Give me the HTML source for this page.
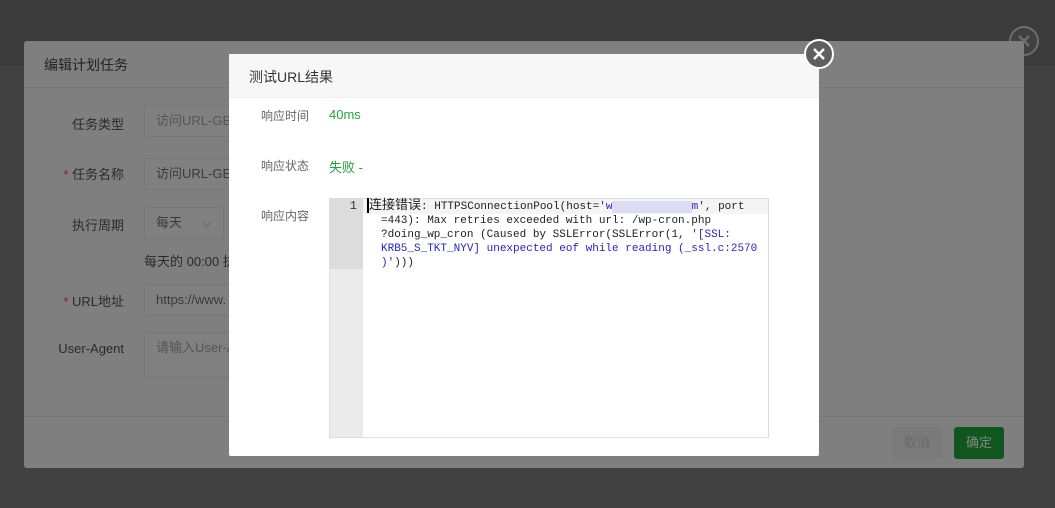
<!DOCTYPE html>
<html><head><meta charset="utf-8"><style>
*{margin:0;padding:0;box-sizing:border-box}
body{width:1055px;height:508px;background:#414141;position:relative;overflow:hidden;font-family:"Liberation Sans","Noto Sans CJK SC",sans-serif;font-size:13px}
.top{position:absolute;left:0;top:0;width:1055px;height:66px;background:#3b3b3b}
.bg{position:absolute;left:24px;top:41px;width:1000px;height:427px;background:#7f7f7f;border-radius:3px}
.bg .hd{height:47px;border-bottom:1px solid #777;padding:14px 20px;font-size:14px;color:#222}
.lbl{position:absolute;color:#2a2a2a;font-size:13px;text-align:right;width:100px}
.lbl .r{color:#8a1f1f}
.inp{position:absolute;left:120px;border:1px solid #777;border-radius:3px;padding:0 11px;color:#3a3a3a;line-height:30px;background:#808080;white-space:nowrap;overflow:hidden}
.ft{position:absolute;left:0;top:375px;width:1000px;border-top:1px solid #777}
.btn{position:absolute;top:386px;height:32px;width:50px;border-radius:3px;line-height:32px;text-align:center;font-size:13px}
.dlg{position:absolute;left:229px;top:54px;width:590px;height:402px;background:#fff;border-radius:2px}
.dlg .hd{height:44px;background:#f7f7f7;border-bottom:1px solid #eee;padding:13px 20px;font-size:14px;color:#333}
.k{position:absolute;left:32px;color:#666;font-size:12px}
.v{position:absolute;left:100px;color:#20a53a;font-size:13px}
.ed{position:absolute;left:100px;top:144px;width:440px;height:240px;border:1px solid #ddd;background:#fff}
.gut{position:absolute;left:0;top:0;width:33px;height:238px;background:#ebebeb}
.gut .a{height:70px;background:#dcdcdc;text-align:right;padding-right:6px;font-size:12px;color:#333;font-family:"Liberation Mono",monospace;line-height:14px}
.code{position:absolute;left:33px;top:0;width:405px;font-family:"Liberation Mono","Noto Sans CJK SC",monospace;font-size:11px;line-height:14px;color:#222;padding-left:4px;white-space:pre}
.code .l1{background:#f4f4f4;margin-left:-4px;padding-left:4px}
.b{color:#2525c8}
.x{position:absolute;border-radius:50%}
</style></head><body>
<div class="top"></div>
<div class="x" style="left:1009px;top:26px;width:30px;height:30px;border:2px solid #6e6e6e;background:#404040"><svg width="26" height="26" style="position:absolute;left:0;top:0"><path d="M8 8L18 18M18 8L8 18" stroke="#6e6e6e" stroke-width="2.5"/></svg></div>
<div class="bg">
<div class="hd">编辑计划任务</div>
<div class="lbl" style="left:0;top:73px">任务类型</div>
<div class="inp" style="top:64px;width:120px;color:#555">访问URL-GET</div>
<div class="lbl" style="left:0;top:123px"><span class="r">* </span>任务名称</div>
<div class="inp" style="top:117px;width:120px">访问URL-GET</div>
<div class="lbl" style="left:0;top:174px">执行周期</div>
<div class="inp" style="top:166px;width:80px">每天 <span style="margin-left:16px;color:#555">⌵</span></div>
<div style="position:absolute;left:120px;top:210px;color:#2a2a2a">每天的 00:00 执</div>
<div class="lbl" style="left:0;top:250px"><span class="r">* </span>URL地址</div>
<div class="inp" style="top:243px;width:120px">https://www.</div>
<div class="lbl" style="left:0;top:300px">User-Agent</div>
<div class="inp" style="top:291px;width:120px;height:46px;color:#555">请输入User-A</div>
<div class="ft"></div>
<div class="btn" style="left:868px;background:#7a7a7a;color:#696969">取消</div>
<div class="btn" style="left:930px;background:#10561f;color:#7f8a80">确定</div>
</div>
<div class="dlg">
<div class="hd">测试URL结果</div>
<div class="k" style="top:53px">响应时间</div><div class="v" style="top:53px">40ms</div>
<div class="k" style="top:103px">响应状态</div><div class="v" style="top:103px">失败 -</div>
<div class="k" style="top:153px">响应内容</div>
<div class="ed"><div class="gut"><div class="a">1</div></div>
<div class="code"><div class="l1"><span style="border-left:2px solid #000;font-size:13px;line-height:14px">连接错误</span>: HTTPSConnectionPool(host=<span class="b">'w<span style="color:#d6d6f2;background:#dcdcf4">            </span>m'</span>, port</div><div style="padding-left:14px">=443): Max retries exceeded with url: /wp-cron.php
?doing_wp_cron (Caused by SSLError(SSLError(1, <span class="b">'[SSL:
KRB5_S_TKT_NYV] unexpected eof while reading (_ssl.c:2570
)'</span>)))</div></div>
</div>
</div>
<div class="x" style="left:804px;top:39px;width:30px;height:30px;border:2px solid #fff;background:#5f5f5f"><svg width="26" height="26" style="position:absolute;left:0;top:0"><path d="M8 8L18 18M18 8L8 18" stroke="#fff" stroke-width="2.5"/></svg></div>
</body></html>
